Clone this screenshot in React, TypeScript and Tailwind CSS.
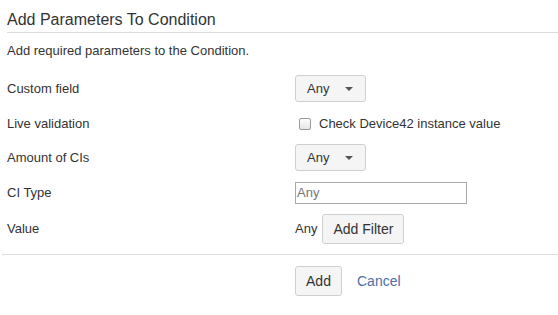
import React from "react";

function Caret() {
  return (
    <span className="ml-auto inline-block w-0 h-0 border-l-[4px] border-r-[4px] border-t-[4px] border-l-transparent border-r-transparent border-t-[#555]" />
  );
}

function SelectBtn() {
  return (
    <button className="flex items-center w-[71px] h-[27px] pl-[11px] pr-[12px] bg-[#f5f5f5] border border-[#cfcfcf] rounded-[3px] text-[13px] text-[#333]">
      <span>Any</span>
      <Caret />
    </button>
  );
}

function Row({ label, children, className }: { label: string; children: React.ReactNode; className: string }) {
  return (
    <div className={"flex items-center pl-[7px] " + className}>
      <div className="w-[288px] text-[13px] leading-[18px]">{label}</div>
      <div className="flex items-center">{children}</div>
    </div>
  );
}

export default function App() {
  return (
    <div
      className="w-[558px] h-[315px] bg-white text-[#333] overflow-hidden"
      style={{ fontFamily: '"Liberation Sans", Arial, sans-serif' }}
    >
      <div className="pl-[7px] pt-[9px] text-[16px] leading-[22px]">Add Parameters To Condition</div>
      <div className="ml-[7px] mt-[1px] border-t border-[#dcdcdc]" />
      <div className="pl-[7px] mt-[9px] text-[13px] leading-[18px]">Add required parameters to the Condition.</div>

      <Row label="Custom field" className="mt-[15px] h-[27px]">
        <SelectBtn />
      </Row>
      <Row label="Live validation" className="mt-[8px] h-[27px]">
        <span className="ml-[4px] w-[12px] h-[12px] rounded-[2px] border border-[#9a9a9a] bg-gradient-to-b from-[#fdfdfd] to-[#e6e6e6]" />
        <span className="ml-[8px] text-[13px] leading-[18px]">Check Device42 instance value</span>
      </Row>
      <Row label="Amount of CIs" className="mt-[7px] h-[27px]">
        <SelectBtn />
      </Row>
      <Row label="CI Type" className="mt-[8px] h-[27px]">
        <div className="w-[172px] h-[22px] border border-[#a9a9a9] flex items-center pl-[1px] text-[13px] text-[#757575]">
          Any
        </div>
      </Row>
      <Row label="Value" className="mt-[8px] h-[30px]">
        <span className="text-[13px] leading-[18px]">Any</span>
        <button className="ml-[5px] h-[30px] w-[82px] bg-[#f5f5f5] border border-[#cfcfcf] rounded-[3px] text-[14px] text-[#333]">
          Add Filter
        </button>
      </Row>

      <div className="ml-[2px] mt-[10px] border-t border-[#dcdcdc]" />

      <div className="flex items-center pl-[295px] mt-[11px]">
        <button className="h-[30px] w-[47px] bg-[#f5f5f5] border border-[#cfcfcf] rounded-[3px] text-[14px] text-[#333]">
          Add
        </button>
        <span className="ml-[15px] text-[14px] text-[#4d6ea8]">Cancel</span>
      </div>
    </div>
  );
}
